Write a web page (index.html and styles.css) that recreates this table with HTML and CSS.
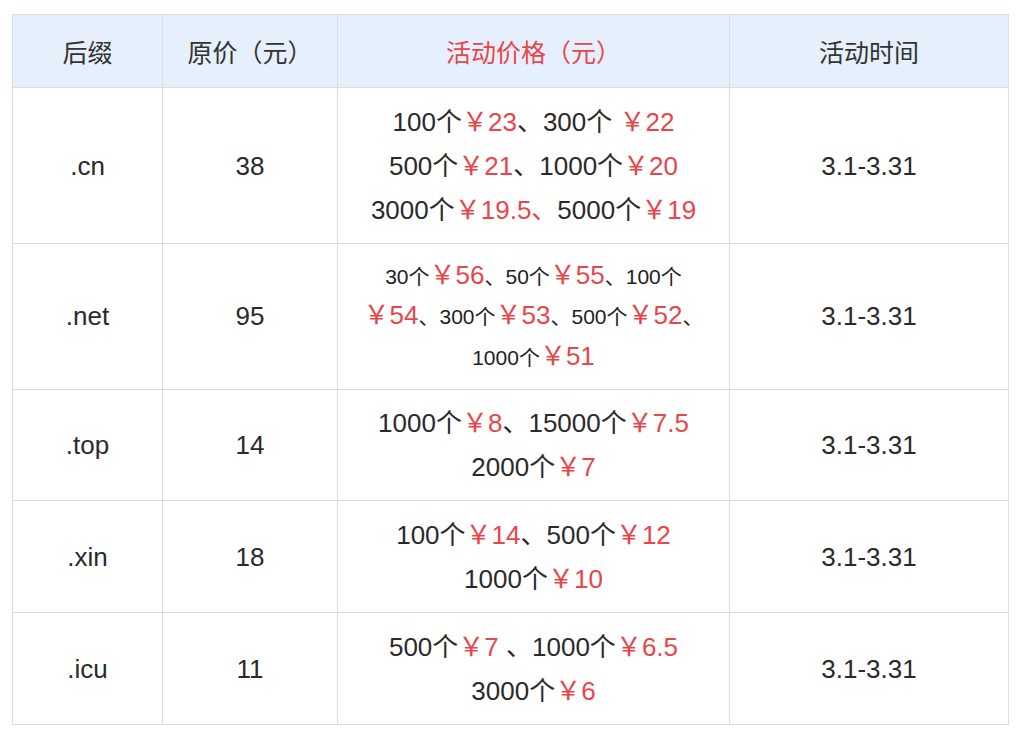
FILE: index.html
```html
<!DOCTYPE html>
<html lang="zh">
<head>
<meta charset="utf-8">
<title>活动价格</title>
<link rel="stylesheet" href="styles.css">
</head>
<body>
<table class="price-table">
  <colgroup>
    <col class="c-suffix">
    <col class="c-orig">
    <col class="c-promo">
    <col class="c-time">
  </colgroup>
  <thead>
    <tr>
      <th>后缀</th>
      <th>原价（元）</th>
      <th class="red">活动价格（元）</th>
      <th>活动时间</th>
    </tr>
  </thead>
  <tbody>
    <tr class="r1">
      <td>.cn</td>
      <td>38</td>
      <td>100个<span class="red">￥23</span>、300个 <span class="red">￥22</span><br>500个<span class="red">￥21</span>、1000个<span class="red">￥20</span><br>3000个<span class="red">￥19.5、</span>5000个<span class="red">￥19</span></td>
      <td>3.1-3.31</td>
    </tr>
    <tr class="r2">
      <td>.net</td>
      <td>95</td>
      <td class="mixed"><span class="sm">30个</span><span class="red">￥56</span><span class="sm">、50个</span><span class="red">￥55</span><span class="sm">、100个</span><br><span class="red">￥54</span><span class="sm">、300个</span><span class="red">￥53</span><span class="sm">、500个</span><span class="red">￥52</span><span class="sm">、</span><br><span class="sm">1000个</span><span class="red">￥51</span></td>
      <td>3.1-3.31</td>
    </tr>
    <tr class="r3">
      <td>.top</td>
      <td>14</td>
      <td>1000个<span class="red">￥8</span>、15000个<span class="red">￥7.5</span><br>2000个<span class="red">￥7</span></td>
      <td>3.1-3.31</td>
    </tr>
    <tr class="r4">
      <td>.xin</td>
      <td>18</td>
      <td>100个<span class="red">￥14</span>、500个<span class="red">￥12</span><br>1000个<span class="red">￥10</span></td>
      <td>3.1-3.31</td>
    </tr>
    <tr class="r4">
      <td>.icu</td>
      <td>11</td>
      <td>500个<span class="red">￥7 </span>、1000个<span class="red">￥6.5</span><br>3000个<span class="red">￥6</span></td>
      <td>3.1-3.31</td>
    </tr>
  </tbody>
</table>
</body>
</html>
```
FILE: styles.css
```css
html, body {
  margin: 0;
  padding: 0;
  background: #ffffff;
}

body {
  padding: 14px 0 0 12px;
  font-family: "Liberation Sans", "Noto Sans CJK SC", sans-serif;
  color: #2a2a2a;
}

.price-table {
  border-collapse: collapse;
  table-layout: fixed;
  width: 996px;
  font-size: 26px;
}

.c-suffix { width: 150px; }
.c-orig { width: 175px; }
.c-promo { width: 392px; }
.c-time { width: 279px; }

.price-table th,
.price-table td {
  border: 1px solid #dcdcdc;
  text-align: center;
  vertical-align: middle;
  padding: 0;
}

.price-table th {
  height: 72px;
  background: #e6f0fd;
  font-weight: normal;
  font-size: 25px;
  color: #333333;
}

.price-table th.red {
  color: #e8464a;
}

.price-table td {
  padding: 11px 0;
  line-height: 44px;
}

.r1 td { height: 133px; }
.r2 td { height: 123px; line-height: 39.5px; }
.r3 td { height: 88px; }
.r4 td { height: 89px; }

.red {
  color: #e8464a;
}

.sm {
  font-size: 21px;
  color: #222222;
}
```
